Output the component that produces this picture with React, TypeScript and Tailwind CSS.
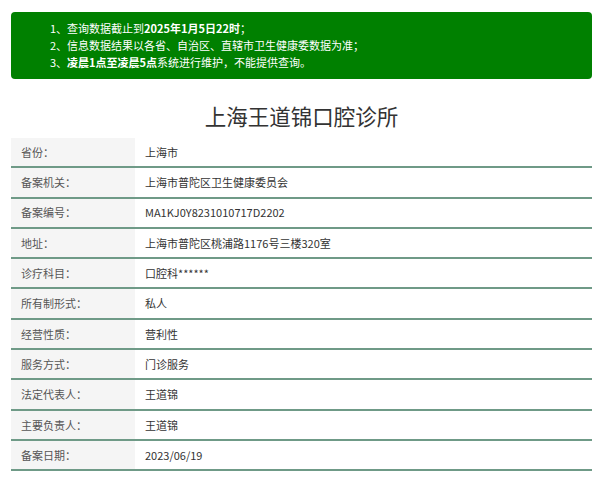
const rows: [string, string][] = [
  ["省份：", "上海市"],
  ["备案机关：", "上海市普陀区卫生健康委员会"],
  ["备案编号：", "MA1KJ0Y8231010717D2202"],
  ["地址：", "上海市普陀区桃浦路1176号三楼320室"],
  ["诊疗科目：", "口腔科******"],
  ["所有制形式：", "私人"],
  ["经营性质：", "营利性"],
  ["服务方式：", "门诊服务"],
  ["法定代表人：", "王道锦"],
  ["主要负责人：", "王道锦"],
  ["备案日期：", "2023/06/19"],
];

export default function App() {
  return (
    <main
      className="min-h-screen bg-white pl-[11px] pr-[8px] pt-[12px]"
      style={{ fontFamily: '"Noto Sans CJK SC", "Noto Sans", sans-serif' }}
    >
      <div className="rounded-[4px] bg-[#008000] py-2 pl-[39px] text-[11px] leading-[17px] text-white">
        <p>
          1、查询数据截止到<span className="font-bold">2025年1月5日22时</span>；
        </p>
        <p>2、信息数据结果以各省、自治区、直辖市卫生健康委数据为准；</p>
        <p>
          3、<span className="font-bold">凌晨1点至凌晨5点</span>
          系统进行维护，不能提供查询。
        </p>
      </div>

      <h1 className="mt-[23px] text-center text-[21.5px] leading-[28px] text-[#333]">
        上海王道锦口腔诊所
      </h1>

      <div className="mt-[8px]">
        {rows.map(([label, value]) => (
          <div
            key={label}
            className="flex h-[30.3px] border-b-2 border-[#6f9a87] text-[11px]"
          >
            <div className="flex w-[124px] items-center bg-[#f5f5f5] pl-[10px] text-[#555]">
              {label}
            </div>
            <div className="flex flex-1 items-center pl-[10px] text-[#333]">
              {value}
            </div>
          </div>
        ))}
      </div>
    </main>
  );
}
